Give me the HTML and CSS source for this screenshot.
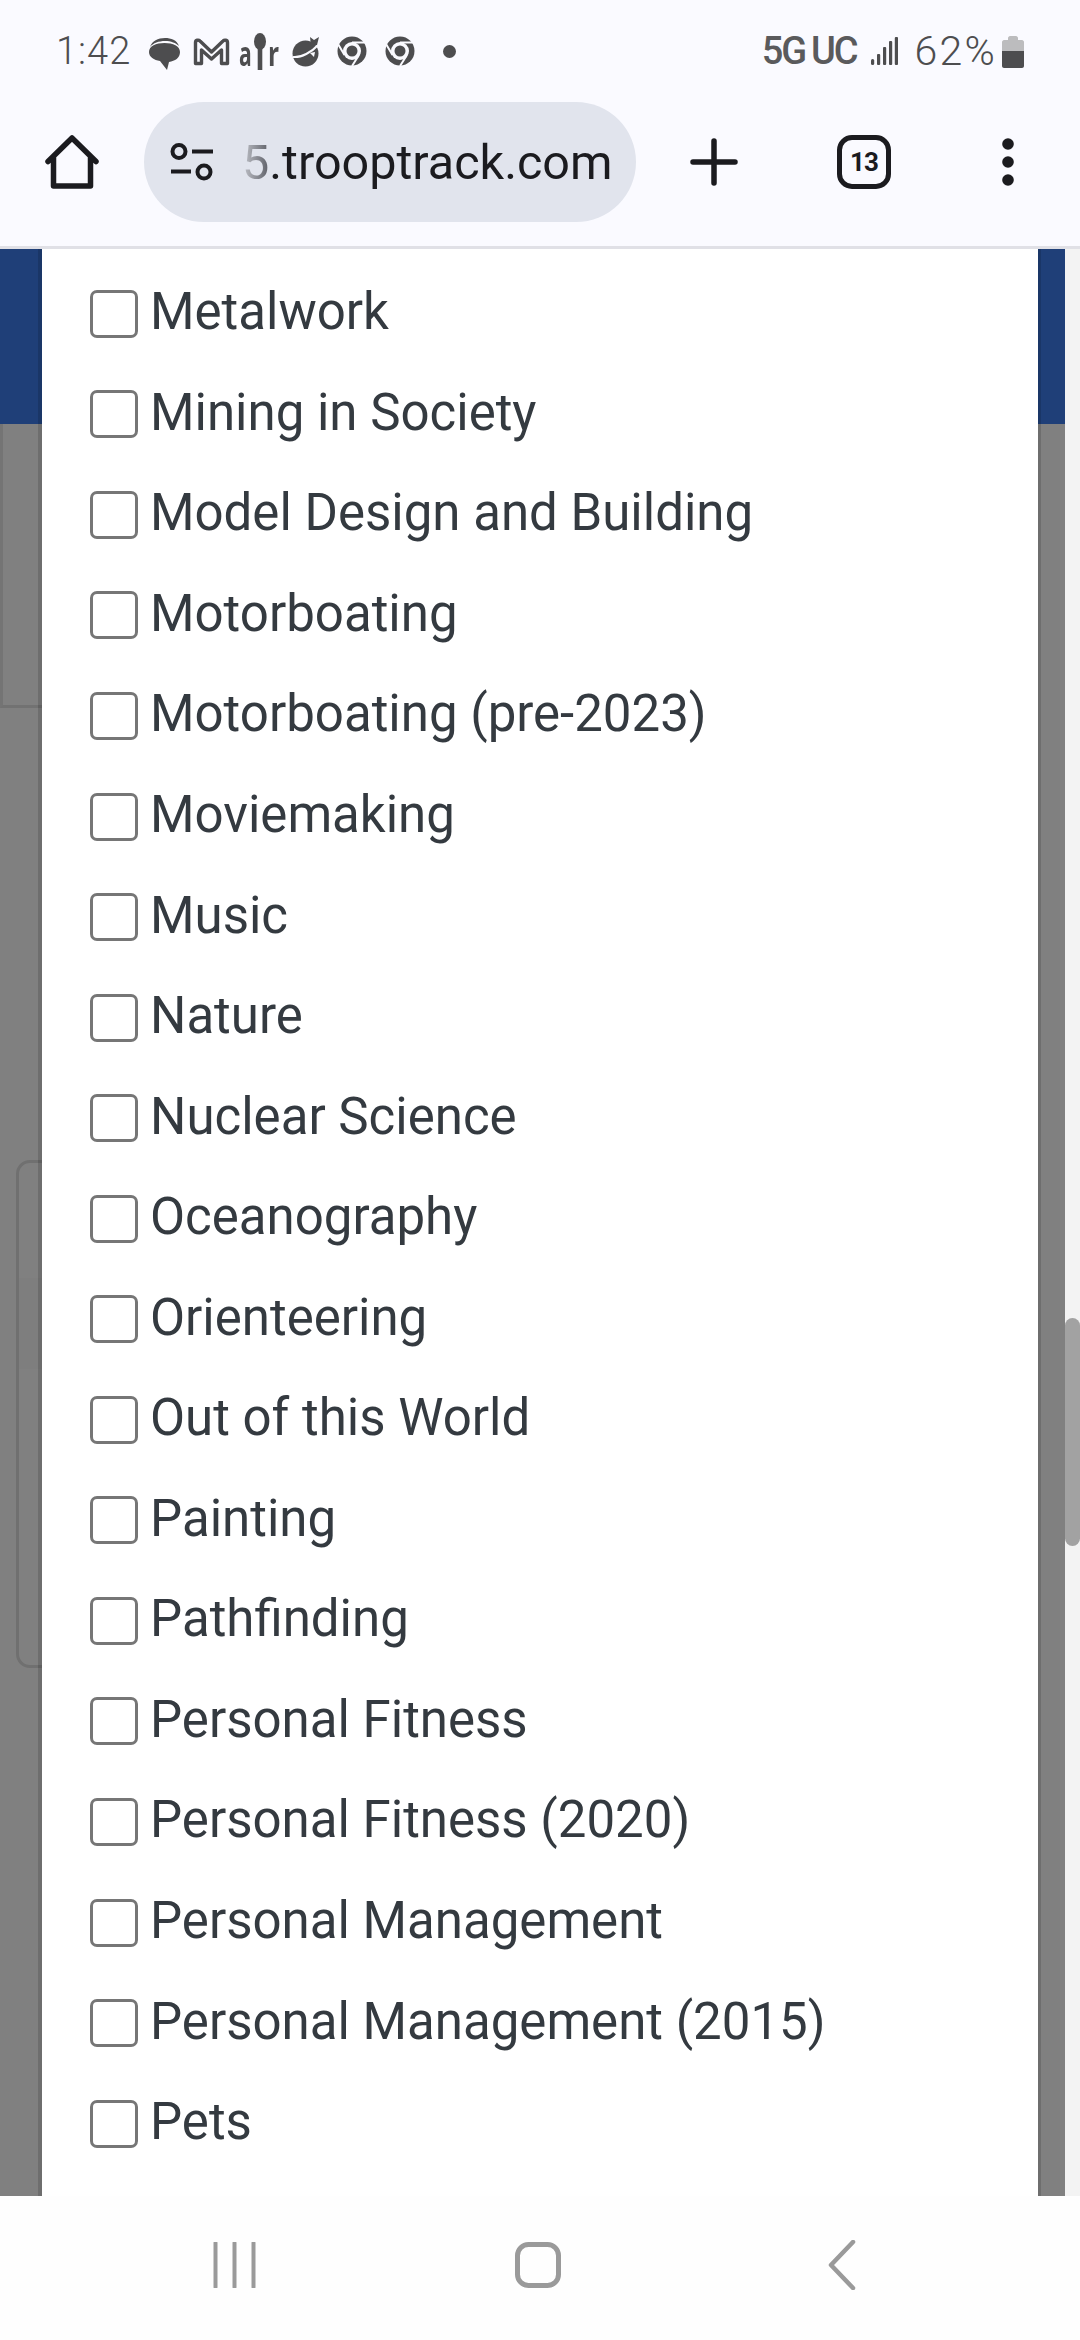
FILE: index.html
```html
<!DOCTYPE html>
<html lang="en">
<head>
<meta charset="utf-8">
<title>TroopTrack merit badges</title>
<link rel="stylesheet" href="styles.css">
</head>
<body>
<div class="phone">
  <header class="chrome">
    <div class="status">
      <div class="status-left">
        <span class="time">1:42</span>
        <svg class="ni ni-bubble" width="31" height="32" viewBox="0 0 31 32"><path d="M1 9C3 3 9 0 16 0c6 0 12 2 14 8-3-3-8-5-14-5S4 5 1 9z" fill="#4d4d4f"/><path d="M0 14c0-6 7-9 15.500-9S31 8 31 14c0 6-5 9-11 10l-2 8-7-9C5 22 0 19 0 14z" fill="#4d4d4f"/></svg>
        <svg class="ni ni-m" width="37" height="28" viewBox="0 0 37 28"><path d="M2.500 25.500V4.500C2.500 2 5.500 1.500 7 3L18.500 14 30 3c1.500-1.500 4.500-1 4.500 1.500v21h-6V12L18.500 21 8.500 12v13.500z" fill="none" stroke="#4d4d4f" stroke-width="3.400" stroke-linejoin="round"/></svg>
        <span class="air"><span class="air-a">a</span><svg class="spoon" width="12" height="37" viewBox="0 0 12 37"><ellipse cx="6" cy="8.500" rx="6" ry="8.500" fill="#4d4d4f"/><rect x="3.700" y="14" width="4.600" height="23" fill="#4d4d4f"/></svg><span class="air-r">r</span></span>
        <svg class="ni ni-planet" width="27" height="32" viewBox="0 0 27 32"><circle cx="13.500" cy="18.500" r="13" fill="#4d4d4f"/><path d="M1 22C9 23 20 17 26 10" fill="none" stroke="#fafaff" stroke-width="2"/><path d="M19 11l-1-9 4 3 5-3-2 8z" fill="#4d4d4f"/><path d="M18 18l4 4 1-5z" fill="#fafaff"/></svg>
        <svg class="ni ni-chrome" width="30" height="30" viewBox="0 0 30 30"><circle cx="15" cy="15" r="14.500" fill="#4d4d4f"/><circle cx="15" cy="15" r="9" fill="#fafaff"/><circle cx="15" cy="15" r="5.500" fill="#4d4d4f"/><path d="M15 6.500h14M7.500 19 1 8M22 19l-7 11" stroke="#fafaff" stroke-width="2"/></svg>
        <svg class="ni ni-chrome2" width="30" height="30" viewBox="0 0 30 30"><circle cx="15" cy="15" r="14.500" fill="#4d4d4f"/><circle cx="15" cy="15" r="9" fill="#fafaff"/><circle cx="15" cy="15" r="5.500" fill="#4d4d4f"/><path d="M15 6.500h14M7.500 19 1 8M22 19l-7 11" stroke="#fafaff" stroke-width="2"/></svg>
        <span class="dot"></span>
      </div>
      <div class="status-right">
        <span class="net">5G</span><span class="net net-uc">UC</span>
        <svg class="signal" width="27" height="28" viewBox="0 0 27 28"><rect x="0" y="22" width="3.200" height="6" rx="1.500" fill="#4d4d4f"/><rect x="6" y="17" width="3.200" height="11" rx="1" fill="#4d4d4f"/><rect x="12" y="10" width="3.200" height="18" rx="1" fill="#4d4d4f"/><rect x="18" y="4" width="3.200" height="24" rx="1" fill="#4d4d4f"/><rect x="23.800" y="0" width="3.200" height="28" rx="1" fill="#4d4d4f"/></svg>
        <span class="pct">62%</span>
        <svg class="battery" width="22" height="32" viewBox="0 0 22 32"><path d="M0 6c0-1 1-2 2-2h4V2c0-1 1-2 2-2h6c1 0 2 1 2 2v2h4c1 0 2 1 2 2v10H0z" fill="#bcbcbe"/><path d="M0 15h22v15c0 1-1 2-2 2H2c-1 0-2-1-2-2z" fill="#4d4d4f"/></svg>
      </div>
    </div>
    <div class="toolbar">
      <svg class="home" width="54" height="54" viewBox="0 0 54 54"><path d="M3 26.500 27 3l24 23.500M8.500 21.500V51h37V21.500" fill="none" stroke="#1b1b1f" stroke-width="5.500" stroke-linejoin="round" stroke-linecap="round"/></svg>
      <div class="omnibox">
        <svg class="tune" width="46" height="38" viewBox="0 0 46 38"><circle cx="10" cy="8.500" r="6.500" fill="none" stroke="#1b1b1f" stroke-width="4"/><path d="M23 8.500h21M2 28.500h20" stroke="#1b1b1f" stroke-width="4"/><circle cx="35" cy="29" r="6.500" fill="none" stroke="#1b1b1f" stroke-width="4"/></svg>
        <span class="url"><span class="fade">5</span>.trooptrack.com</span>
      </div>
      <svg class="plus" width="48" height="48" viewBox="0 0 48 48"><path d="M24 3v42M3 24h42" stroke="#1b1b1f" stroke-width="5.500" stroke-linecap="round"/></svg>
      <div class="tabs">13</div>
      <svg class="more" width="14" height="48" viewBox="0 0 14 48"><circle cx="7" cy="6" r="5.800" fill="#1b1b1f"/><circle cx="7" cy="24" r="5.800" fill="#1b1b1f"/><circle cx="7" cy="42" r="5.800" fill="#1b1b1f"/></svg>
    </div>
  </header>

  <main class="view">
    <div class="page">
      <div class="band"></div>
      <div class="rule"></div>
      <div class="card"><div class="card-shade"></div></div>
    </div>
    <section class="modal">
      <label class="row"><span class="box"></span>Metalwork</label>
      <label class="row"><span class="box"></span>Mining in Society</label>
      <label class="row"><span class="box"></span>Model Design and Building</label>
      <label class="row"><span class="box"></span>Motorboating</label>
      <label class="row"><span class="box"></span>Motorboating (pre-2023)</label>
      <label class="row"><span class="box"></span>Moviemaking</label>
      <label class="row"><span class="box"></span>Music</label>
      <label class="row"><span class="box"></span>Nature</label>
      <label class="row"><span class="box"></span>Nuclear Science</label>
      <label class="row"><span class="box"></span>Oceanography</label>
      <label class="row"><span class="box"></span>Orienteering</label>
      <label class="row"><span class="box"></span>Out of this World</label>
      <label class="row"><span class="box"></span>Painting</label>
      <label class="row"><span class="box"></span>Pathfinding</label>
      <label class="row"><span class="box"></span>Personal Fitness</label>
      <label class="row"><span class="box"></span>Personal Fitness (2020)</label>
      <label class="row"><span class="box"></span>Personal Management</label>
      <label class="row"><span class="box"></span>Personal Management (2015)</label>
      <label class="row"><span class="box"></span>Pets</label>
    </section>
    <aside class="track"><div class="thumb"></div></aside>
  </main>

  <nav class="navbar">
    <svg width="46" height="46" viewBox="0 0 46 46"><path d="M2.500 1v44M21.500 1v44M40.500 1v44" stroke="#9a9a9a" stroke-width="4" stroke-linecap="round"/></svg>
    <svg width="46" height="46" viewBox="0 0 46 46"><rect x="2.500" y="2.500" width="41" height="41" rx="11" fill="none" stroke="#9a9a9a" stroke-width="5"/></svg>
    <svg width="28" height="50" viewBox="0 0 28 50"><path d="M25 2 3 25l22 23" fill="none" stroke="#9a9a9a" stroke-width="4.500" stroke-linecap="round" stroke-linejoin="round"/></svg>
  </nav>
</div>
</body>
</html>
```
FILE: styles.css
```css
* { box-sizing: border-box; }
html, body { margin: 0; padding: 0; }
body { width: 1080px; height: 2340px; overflow: hidden; background: #fff; font-family: Roboto, "Liberation Sans", sans-serif; }
.phone { width: 1080px; height: 2340px; display: flex; flex-direction: column; }

.chrome { height: 249px; flex: none; background: #fafaff; border-bottom: 3px solid #e0e0e6; display: flex; flex-direction: column; }
.status { height: 78px; padding: 28px 56px 0 56px; display: flex; justify-content: space-between; align-items: flex-start; color: #4d4d4f; }
.status-left, .status-right { display: flex; align-items: center; height: 46px; }
.time { font-size: 38px; font-weight: 300; letter-spacing: 1px; width: 74px; flex: none; white-space: nowrap; }
.ni { flex: none; }
.ni-bubble { margin-left: 19px; margin-top: 6px; }
.ni-m { margin-left: 13px; margin-top: 2px; }
.air { font-family: "Open Sans", sans-serif; font-size: 34px; font-weight: 700; display: flex; align-items: center; width: 39px; margin-left: 9px; line-height: 1; flex: none; }
.air-a { display: block; width: 11px; flex: none; transform: scaleX(.62); transform-origin: left center; margin-top: 3px; }
.air-r { display: block; width: 10px; flex: none; transform: scaleX(.72); transform-origin: left center; margin-top: 3px; }
.spoon { margin: 0 2px 0 4px; flex: none; }
.ni-planet { margin-left: 14px; margin-top: -1px; }
.ni-chrome { margin-left: 18px; }
.ni-chrome2 { margin-left: 18px; }
.dot { width: 13px; height: 13px; border-radius: 50%; background: #4d4d4f; margin-left: 28px; flex: none; }
.net { font-size: 38px; font-weight: 500; letter-spacing: -2.200px; color: #5a5a5c; }
.net-uc { margin-left: 6px; letter-spacing: -2px; }
.signal { margin: 0 17px 0 14px; flex: none; }
.pct { font-size: 41px; font-weight: 300; letter-spacing: 2.200px; white-space: nowrap; }
.battery { margin-left: 5px; flex: none; margin-top: 2px; }

.toolbar { flex: 1; display: flex; align-items: center; padding: 0 0 0 45px; }
.home { flex: none; }
.omnibox { width: 492px; height: 120px; margin-left: 45px; background: #e1e4ed; border-radius: 60px; display: flex; align-items: center; padding-left: 25px; overflow: hidden; flex: none; }
.tune { flex: none; }
.url { font-size: 48.500px; color: #1b1b1f; margin-left: 27px; white-space: nowrap; }
.fade { background: linear-gradient(to right, #c2c4cb, #5e6068); -webkit-background-clip: text; background-clip: text; color: transparent; }
.plus { flex: none; margin-left: 54px; }
.tabs { width: 54px; height: 54px; margin-left: 99px; border: 5.500px solid #1b1b1f; border-radius: 15px; flex: none; display: flex; align-items: center; justify-content: center; font-size: 26px; font-weight: 700; letter-spacing: -1px; color: #1b1b1f; }
.more { flex: none; margin-left: 110px; }

.view { position: relative; height: 1947px; flex: none; display: flex; background: #808080; overflow: hidden; }
.page { width: 42px; flex: none; }
.band { position: absolute; left: 0; top: 0; width: 1065px; height: 175px; background: #1f3f78; }
.rule { position: absolute; left: 0; top: 175px; width: 42px; height: 284px; border-left: 3px solid #747474; border-bottom: 3px solid #727272; }
.card { position: absolute; left: 16px; top: 911px; width: 40px; height: 508px; border: 3px solid #707070; border-radius: 14px; }
.card-shade { position: absolute; left: 0; right: 0; top: 115px; height: 91px; background: #7e7e7e; }
.modal { position: relative; width: 996px; flex: none; background: #fff; padding: 12.500px 0 0 48px; box-shadow: -4px 0 0 rgba(0,0,0,.14), 3px 0 0 rgba(0,0,0,.14); }
.row { display: flex; align-items: center; height: 100.550px; font-size: 51px; line-height: 1; color: #343a40; white-space: nowrap; }
.box { width: 48px; height: 48px; margin: 4px 12px 0 0; border: 3.500px solid #767676; border-radius: 7px; background: #fff; flex: none; }
.track { position: absolute; right: 0; top: 0; bottom: 0; width: 15px; background: #f3f3f3; }
.thumb { position: absolute; left: 0; top: 1069px; width: 15px; height: 228px; background: #a2a2a2; border-radius: 8px; }

.navbar { flex: 1; background: #fefefe; display: flex; align-items: center; padding-bottom: 6px; }
.navbar svg:nth-child(1) { margin-left: 213px; flex: none; }
.navbar svg:nth-child(2) { margin-left: 256px; flex: none; }
.navbar svg:nth-child(3) { margin-left: 267px; flex: none; }
```
